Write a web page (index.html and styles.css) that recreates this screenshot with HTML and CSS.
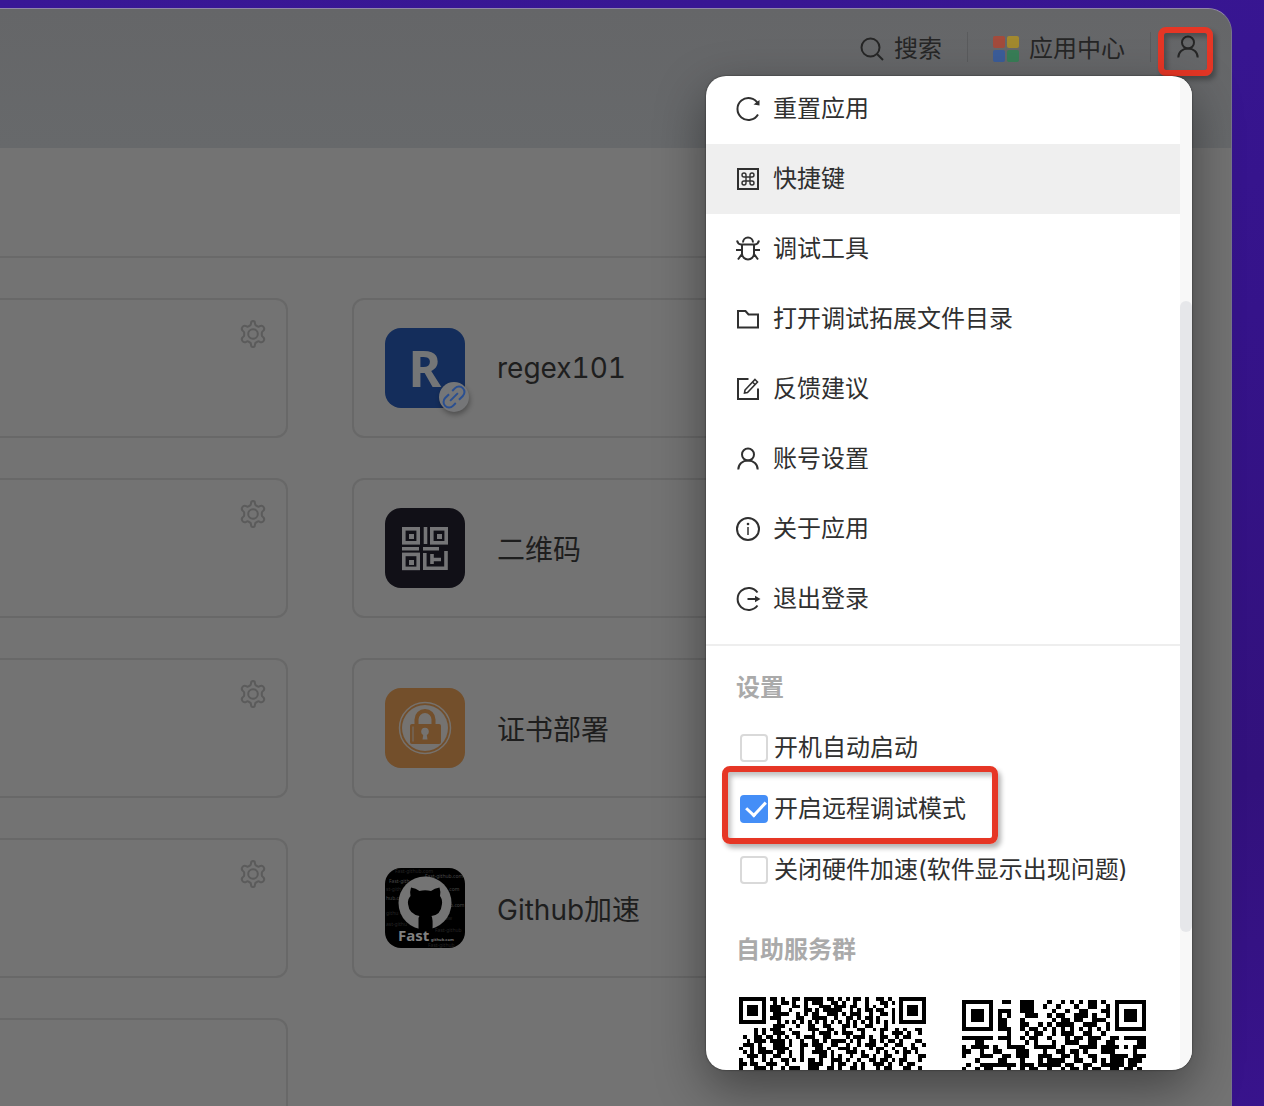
FILE: index.html
```html
<!DOCTYPE html>
<html lang="zh-CN">
<head>
<meta charset="utf-8">
<title>应用中心</title>
<link rel="stylesheet" href="styles.css">
</head>
<body>
<svg class="sprite" aria-hidden="true">
  <symbol id="gear" viewBox="0 0 28 28"><path d="M11 5.500Q12 5 12 3.500Q12 1 14 1T16 3.500Q16 5 17 5.500L18.500 6.400Q19.500 7 20.800 6.200Q23.200 5 24.700 7.200Q26 9.500 24 11Q22.800 11.700 22.800 12.800V15.200Q22.800 16.300 24 17Q26 18.500 24.700 20.800Q23.200 23 20.800 21.800Q19.500 21 18.500 21.600L17 22.500Q16 23 16 24.500Q16 27 14 27T12 24.500Q12 23 11 22.500L9.500 21.600Q8.500 21 7.200 21.800Q4.800 23 3.300 20.800Q2 18.500 4 17Q5.200 16.300 5.200 15.200V12.800Q5.200 11.700 4 11Q2 9.500 3.300 7.200Q4.800 5 7.200 6.200Q8.500 7 9.500 6.400Z"/><circle cx="14" cy="14" r="4.800"/></symbol>
  <symbol id="user" viewBox="0 0 24 24"><circle cx="12" cy="7.500" r="6"/><path d="M2.300 22.500C2.300 17 6.500 13.500 12 13.500S21.700 17 21.700 22.500"/></symbol>
</svg>
<div class="window">
  <header class="header">
    <button class="tool"><svg class="icon" viewBox="0 0 24 24"><circle cx="10.500" cy="10.500" r="9"/><path d="M17 17L23 23"/></svg>搜索</button>
    <span class="separator"></span>
    <button class="tool"><svg class="apps" viewBox="0 0 26 26"><rect width="12" height="12" rx="2" fill="#a34b3c"/><rect x="14" width="12" height="12" rx="2" fill="#a2892f"/><rect y="14" width="12" height="12" rx="2" fill="#3c5d99"/><rect x="14" y="14" width="12" height="12" rx="2" fill="#387e57"/></svg>应用中心</button>
    <span class="separator"></span>
    <button class="tool account" aria-label="账号"><svg class="icon"><use href="#user"/></svg><span class="mark"></span></button>
  </header>
  <main class="content">
    <div class="column side">
      <article class="card"><button class="setting" aria-label="设置"><svg><use href="#gear"/></svg></button></article>
      <article class="card"><button class="setting" aria-label="设置"><svg><use href="#gear"/></svg></button></article>
      <article class="card"><button class="setting" aria-label="设置"><svg><use href="#gear"/></svg></button></article>
      <article class="card"><button class="setting" aria-label="设置"><svg><use href="#gear"/></svg></button></article>
      <article class="card"></article>
    </div>
    <div class="column">
      <article class="card">
        <div class="logo blue"><span>R</span>
          <div class="badge"><svg viewBox="0 0 30 30"><g transform="rotate(-45 15 15)"><path d="M13.500 9.500H8A5.500 5.500 0 0 0 8 20.500H12M16.500 20.500H22A5.500 5.500 0 0 0 22 9.500H18M9.500 15H20.500"/></g></svg></div>
        </div>
        <h2>regex101</h2>
      </article>
      <article class="card">
        <svg class="logo" viewBox="0 0 80 80"><rect width="80" height="80" fill="#111017"/><g fill="none" stroke="#757577" stroke-width="3.600"><rect x="18.800" y="20.800" width="14.400" height="14"/><rect x="46.800" y="20.800" width="14.400" height="14"/><rect x="18.800" y="46.400" width="14.400" height="14"/><path d="M40.500 19V36M17 40.800H34M38 40.800H54M39.800 45V60.300H61V43M47 46V56M47 51.500H56"/></g><path fill="#757577" d="M24 26h5v5h-5zM52 26h5v5h-5zM24 52h5v5h-5z"/></svg>
        <h2>二维码</h2>
      </article>
      <article class="card">
        <svg class="logo" viewBox="0 0 80 80"><rect width="80" height="80" fill="#734f2b"/><circle cx="40" cy="40" r="25.500" fill="none" stroke="#76716c" stroke-width="1.500"/><circle cx="40" cy="40" r="23" fill="#757371"/><path d="M31.500 36V31.500a8.500 8.500 0 0 1 17 0V36" fill="none" stroke="#734f2b" stroke-width="4"/><rect x="25" y="36" width="31" height="20" rx="2" fill="#734f2b"/><path d="M28 38.500V53.500" stroke="#757371"/><circle cx="40" cy="43.500" r="3.800" fill="#757371"/><path d="M38.500 45h3l1 6.500h-5z" fill="#757371"/></svg>
        <h2>证书部署</h2>
      </article>
      <article class="card">
        <svg class="logo github" viewBox="0 0 80 80"><rect width="80" height="80" fill="#000"/><g class="faint"><text x="10" y="5">Fast-github.com</text><text x="40" y="10" class="lit">Fast-github.com</text><text x="4" y="15" class="lit">Fast-gith</text><text x="1" y="23">st-gith</text><text x="63" y="23" class="lit">.com</text><text x="1" y="32" class="lit">hub.c</text><text x="65" y="39" class="lit">b.com</text><text x="1" y="47">githu</text><text x="60" y="52">ow</text><text x="1" y="58">ast-githu</text><text x="50" y="64">Fast-github</text><text x="43" y="79">Fast-github</text></g><circle cx="40" cy="35" r="26.500" fill="#747474"/><path fill="#000" d="M26 19.500Q31 20 34.500 23Q40 21.500 46 23Q49.500 20 54.500 19.500Q56 24 55 28Q57.500 31 57 36Q56 47 46.500 48Q48 50 47.500 62H33.500V50Q34 48.500 34.500 48Q24 46 23 36Q22.500 31 25.500 28Q24.500 24 26 19.500Z"/><text x="13" y="72.500" class="fast">Fast</text><text x="46" y="73" class="domain">github.com</text></svg>
        <h2>Github加速</h2>
      </article>
    </div>
  </main>
</div>

<aside class="menu">
  <div class="scroll">
    <nav class="items">
      <button><svg class="icon" viewBox="0 0 24 24"><path d="M22 6.500A11 11 0 1 0 22 17.500"/><path d="M23.500 3v5.500L17.500 7.500z" fill="#303030" stroke="none"/></svg>重置应用</button>
      <button class="active"><svg class="icon" viewBox="0 0 24 24"><path d="M2 2H22V22H2Z"/><path stroke-width="1.400" d="M10 10V8a2 2 0 1 0-2 2h8a2 2 0 1 0-2-2v8a2 2 0 1 0 2-2H8a2 2 0 1 0 2 2Z"/></svg>快捷键</button>
      <button><svg class="icon" viewBox="0 0 24 24"><path d="M7 5.500a5 5 0 0 1 10 0M1 3.500Q2 7.300 5 7.500H19Q22 7.300 23 3.500M6 7.500V16.500a6 6 0 0 0 12 0V7.500M0 13H6M18 13H24M6 17L2 22.500M18 17L22 22.500"/></svg>调试工具</button>
      <button><svg class="icon" viewBox="0 0 24 24"><path d="M2 4H9.500L12.500 7.500H22V20.500H2Z"/></svg>打开调试拓展文件目录</button>
      <button><svg class="icon" viewBox="0 0 24 24"><path d="M12.500 2H2V22H22V11.500"/><path stroke-width="1.600" d="M19 2.500L21.500 5L11.500 15.500L8.500 16L9 13ZM16.500 5L19 7.500"/></svg>反馈建议</button>
      <button><svg class="icon"><use href="#user"/></svg>账号设置</button>
      <button><svg class="icon" viewBox="0 0 24 24"><circle cx="12" cy="12" r="11"/><path stroke-width="1.500" d="M12 10V18"/><circle cx="12" cy="7" r="1.300" fill="#303030" stroke="none"/></svg>关于应用</button>
      <button><svg class="icon" viewBox="0 0 24 24"><path d="M21.500 5.500A11 11 0 1 0 21.500 18.500M11.500 12H20"/><path d="M19 8.800L24.500 12L19 15.200Z" fill="#303030" stroke="none"/></svg>退出登录</button>
    </nav>
    <section class="settings">
      <h3>设置</h3>
      <label><input type="checkbox">开机自动启动</label>
      <label><input type="checkbox" checked>开启远程调试模式<span class="mark"></span></label>
      <label><input type="checkbox">关闭硬件加速(软件显示出现问题)</label>
    </section>
    <section class="groups">
      <h3>自助服务群</h3>
      <div class="codes"><svg class="code" id="code-a" viewBox="0 0 49 49"></svg><svg class="code small" id="code-b" viewBox="0 0 41 41"></svg></div>
    </section>
  </div>
  <div class="track"><div class="thumb"></div></div>
</aside>
<script src="codes.js"></script>
</body>
</html>
```
FILE: styles.css
```css
* { box-sizing: border-box; }
body {
  margin: 0;
  height: 100vh;
  position: relative;
  overflow: hidden;
  display: flex;
  padding: 8px 32px 0 0;
  background: linear-gradient(170deg, #391796, #35138a 40%, #32117c 75%, #38138c);
  font-family: Inter, "Noto Sans CJK SC", sans-serif;
  font-size: 24px;
  color: #303030;
}
button {
  border: 0;
  padding: 0;
  background: none;
  font: inherit;
  color: inherit;
}
h2, h3 { margin: 0; }
.sprite { display: none; }
.window {
  flex: 1;
  min-width: 0;
  overflow: hidden;
  border-top: 1px solid #9187a8;
  border-right: 1px solid #77758a;
  border-radius: 0 24px 0 0;
  background: #737373;
}
.header {
  height: 139px;
  padding: 20px 31px 0 0;
  display: flex;
  justify-content: flex-end;
  align-items: flex-start;
  gap: 25px;
  background: linear-gradient(#656668, #67696b);
  color: #262626;
}
.tool {
  display: flex;
  align-items: center;
  gap: 10px;
  height: 40px;
  line-height: 40px;
}
.account { position: relative; height: 36px; }
.icon {
  width: 24px;
  height: 24px;
  flex: none;
  overflow: visible;
  fill: none;
  stroke: currentColor;
  stroke-width: 2;
}
.apps { width: 26px; height: 26px; }
.separator {
  width: 1px;
  height: 30px;
  margin-top: 3px;
  background: #5a5b5d;
}
.mark {
  position: absolute;
  border: 6px solid #e63625;
  border-radius: 8px;
  box-shadow: 3px 4px 5px rgba(0, 0, 0, .3), inset 3px 4px 5px rgba(0, 0, 0, .25);
}
.account .mark { inset: -2px -13px -11px -18px; }
.content {
  display: flex;
  gap: 64px;
  margin: 108px 48px 0 0;
  padding-top: 40px;
  border-top: 2px solid #696969;
}
.column {
  flex: 1;
  display: grid;
  gap: 40px;
  align-content: start;
}
.side { flex: 0 0 288px; }
.card {
  height: 140px;
  border: 2px solid #686868;
  border-radius: 12px;
  padding: 0 31px;
  display: flex;
  align-items: center;
  gap: 32px;
}
.side .card {
  border-left: 0;
  border-radius: 0 12px 12px 0;
  padding: 20px 19px;
  align-items: flex-start;
  justify-content: flex-end;
}
.setting svg {
  display: block;
  width: 28px;
  height: 28px;
  fill: none;
  stroke: #5b5b5b;
  stroke-width: 2;
}
.card h2 {
  font-size: 28px;
  line-height: normal;
  font-weight: 400;
  font-variant-numeric: tabular-nums;
  color: #1e1e1e;
}
.logo {
  width: 80px;
  height: 80px;
  border-radius: 16px;
  flex: none;
}
.blue {
  position: relative;
  background: #142d5b;
  display: grid;
  place-items: center;
  font: 700 50px/80px "Noto Sans", sans-serif;
  color: #757677;
}
.badge {
  position: absolute;
  right: -4px;
  bottom: -4px;
  width: 30px;
  height: 30px;
  border-radius: 50%;
  background: #757678;
  box-shadow: 1px 3px 5px rgba(0, 0, 0, .3);
}
.badge svg {
  display: block;
  fill: none;
  stroke: #2a4f91;
  stroke-width: 2;
}
.github { font-family: "Noto Sans", sans-serif; }
.faint { font-size: 5px; fill: #252525; }
.lit { fill: #484848; }
.fast { font-size: 15px; font-weight: 700; fill: #818181; }
.domain { font-size: 4px; font-weight: 700; fill: #777; }
.menu {
  position: absolute;
  top: 76px;
  right: 72px;
  bottom: 36px;
  width: 486px;
  display: flex;
  overflow: hidden;
  border-radius: 20px;
  background: #fff;
  box-shadow: 0 0 2px rgba(0, 0, 0, .6), 0 18px 50px rgba(0, 0, 0, .42);
}
.scroll {
  flex: 1;
  min-width: 0;
  overflow: hidden;
}
.items {
  margin-top: -2px;
  padding-bottom: 10px;
  border-bottom: 2px solid #eee;
}
.items button {
  display: flex;
  align-items: center;
  gap: 13px;
  width: 100%;
  height: 70px;
  padding: 0 30px;
  line-height: 40px;
}
.items .active { background: #efefef; }
.settings, .groups { padding: 22px 30px 0; }
.menu h3 {
  font-size: 24px;
  line-height: 40px;
  color: #aaa;
}
.settings h3 { margin-bottom: 9px; }
.settings label {
  position: relative;
  display: flex;
  align-items: center;
  gap: 6px;
  height: 61px;
  padding-left: 4px;
  line-height: 40px;
}
.settings input {
  appearance: none;
  width: 28px;
  height: 28px;
  margin: 0;
  border: 2px solid #d9d9d9;
  border-radius: 4px;
  background: #fff;
}
.settings input:checked {
  border-color: #448ef7;
  background: #448ef7;
}
.settings input:checked::after {
  content: "";
  display: block;
  width: 9px;
  height: 16px;
  margin: 1px 0 0 8px;
  border: solid #fff;
  border-width: 0 3px 3px 0;
  transform: translate(0, -1px) rotate(43deg);
}
.settings .mark {
  left: -14px;
  top: -12px;
  width: 276px;
  height: 78px;
}
.groups { padding-top: 30px; }
.codes {
  display: flex;
  gap: 36px;
  align-items: flex-start;
  margin-top: 27px;
  padding-left: 3px;
}
.code { width: 187px; height: 187px; flex: none; }
.small { width: 184px; height: 184px; margin-top: 3px; }
.track { width: 12px; background: #f8f8f8; padding-top: 225px; }
.thumb { height: 631px; border-radius: 6px; background: #e6e7ea; }
```
FILE: codes.js
```js
// Each string is one row of modules: "#" is black.
const codeA = [
  "####### ## #  ## ##### ## # # ## #  ## #  ####    ",
  "#     #  # ## #  # ###  ## #  #  #   ## # #       ",
  "# ### # ###   ## #   ### ### ##  # #  #  ##       ",
  "# ### # ###  #   ## # #####  # # ## ##  # #       ",
  "# ### #  ####  # # ##  ### # ###  #  ## ##        ",
  "#     # ###    ##  ####  #  ## # ## #   # #       ",
  "#######   # # # # # # # # # # # # # # # #         ",
  "         ###   #  ##  ##   ## #  ##   #  #        ",
  "    # # ###  #    ###  ##  #   ##  # ##  # #  ##  ",
  "    # #  ###  ##   # ### # ###  #    #  ### #  #  ",
  " #  ## ## # #  # ###  ##    # ### #  ##  # ##    #",
  "  # ### #### #  #  ## # #### # #  ## # ## #   ##  ",
  " ### #   ### #  ## ###  ##  #  # ###  #  ##  #  # ",
  "#  # ##  ####   #   ## #  ### #   # ##  #  # ##   ",
  " # # #### ## #  #  #### #   ### #   # #  # ## #  #",
  "  ### #  ##  #  #    ## # #  #  ## #  ##   #   ## ",
  "#  #  # #  ## # # ## #  ### #  #  ## ## # ##   #  ",
  "## ##  ###  #     ####  # ##  # #  ### #  # ##   #",
  "#   ### #  # ###  ###  ## #  ## #   # ##   ##  #  ",
  "# # #  ## ## ###  # ##  ## ###  ###  # ##  # # ## "
];
const codeB = [
  "#######  ##  ###   #  # # # ## #  #       ",
  "#     #      ###  #  #   #  ##  # #       ",
  "# ### # ###  ###    #  #  ##   ##         ",
  "# ### # # #   ###  # ##  ### #  # #       ",
  "# ### # ##   #      # ## ##  ### ##       ",
  "#     # ##   ##  # # ####  ###  ###       ",
  "####### ###  # ## # # # # # # # #         ",
  "          #   # ##  # ###  ##  #          ",
  "####### ###  # ##  #   # ## ###  ## ##### ",
  "   ##     #   # #   #  ###  ##  ##     ## ",
  "# #### #  ####  ##### #   #### #### # ### ",
  "##  #  ##   ###   #  ## ## #   ###    #  #",
  "#   ###  ## ###  ###  ## #  ##   #### ### ",
  "   #    ##   #   # ####  ##  # # ### ###  ",
  " #  ######## ### ##### ##  ##  ##### ##   ",
  "#  # ##   #  # ##  #  # ## # ##  ## ## #  "
];
const finder = ["#######", "#     #", "# ### #", "# ### #", "# ### #", "#     #", "#######"];
function draw(id, rows, size) {
  let d = "";
  rows.forEach((row, y) => {
    const right = y < 7 ? finder[y] : y === 7 ? "" : row.slice(size - 7, size);
    const cells = row.slice(0, size - 7).padEnd(size - 7) + right;
    [...cells].forEach((cell, x) => {
      if (cell === "#" && !(y < 8 && x === size - 8)) d += `M${x} ${y}h1v1h-1z`;
    });
  });
  const path = document.createElementNS("http://www.w3.org/2000/svg", "path");
  path.setAttribute("d", d);
  path.setAttribute("shape-rendering", "crispEdges");
  document.getElementById(id).append(path);
}
draw("code-a", codeA, 49);
draw("code-b", codeB, 41);
```
